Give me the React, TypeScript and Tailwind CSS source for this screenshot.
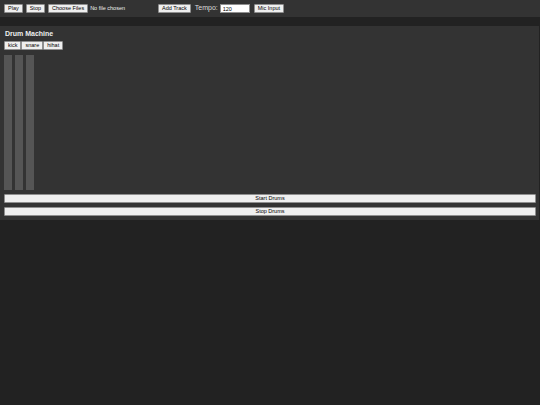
import React from 'react';

const btn = 'h-[9px] border border-[#8f8f8f] bg-[#efefef] px-[3px] text-[5.5px] leading-none text-black rounded-[1px]';

export default function App() {
  const tracks = ['kick', 'snare', 'hihat'];

  return (
    <div className="min-h-[405px] w-[540px] bg-[#222222] font-['Liberation_Sans',Arial,sans-serif] text-white antialiased">
      {/* top toolbar */}
      <div className="flex h-[17px] items-center bg-[#333333] px-[4px]">
        <button className={btn}>Play</button>
        <button className={`${btn} ml-[3px]`}>Stop</button>
        <button className={`${btn} ml-[3px]`}>Choose Files</button>
        <span className="ml-[2px] text-[5.5px] text-[#eeeeee]">No file chosen</span>
        <button className={`${btn} ml-[33px]`}>Add Track</button>
        <span className="ml-[4px] text-[7px] text-[#dddddd]">Tempo:</span>
        <input
          defaultValue="120"
          className="ml-[2px] h-[9px] w-[30px] border border-[#8f8f8f] bg-white px-[2px] text-[5.5px] text-black outline-none"
        />
        <button className={`${btn} ml-[4px]`}>Mic Input</button>
      </div>

      <div className="h-[9px]" />

      {/* drum machine panel */}
      <div className="mr-px bg-[#333333] px-[4px] pb-[4px] pt-[3px]">
        <h2 className="pl-px text-[7px] font-bold leading-[9px] text-[#eeeeee]">Drum Machine</h2>
        <div className="mt-[3px] flex">
          {tracks.map((t) => (
            <button key={t} className={`${btn} h-[8px]`}>{t}</button>
          ))}
        </div>
        <div className="mt-[5px] flex gap-[3px]">
          {tracks.map((t) => (
            <div key={t} className="h-[135px] w-[8px] bg-[#555555]" />
          ))}
        </div>
        <button className={`${btn} mt-[4px] block w-[532px]`}>Start Drums</button>
        <button className={`${btn} mt-[4px] block w-[532px]`}>Stop Drums</button>
      </div>
    </div>
  );
}
